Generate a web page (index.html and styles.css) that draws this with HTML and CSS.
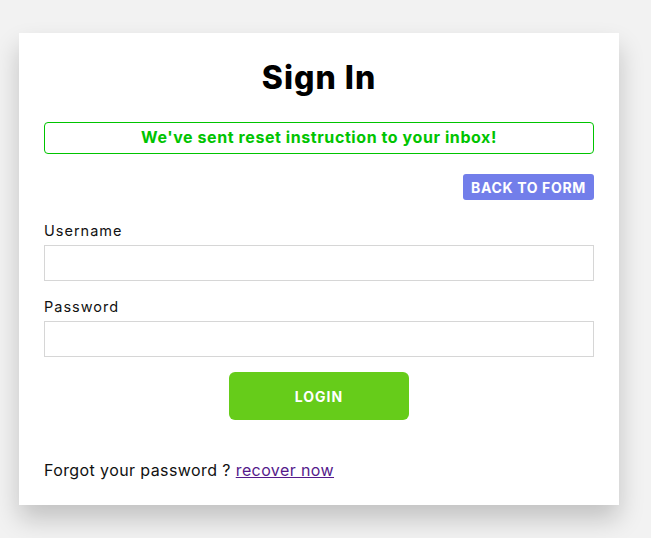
FILE: index.html
```html
<!DOCTYPE html>
<html lang="en">
<head>
<meta charset="utf-8">
<title>Sign In</title>
<link rel="stylesheet" href="styles.css">
</head>
<body>
<div class="card">
  <h1 class="title">Sign In</h1>
  <div class="alert">We've sent reset instruction to your inbox!</div>
  <div class="back-row"><button class="back-btn" type="button">BACK TO FORM</button></div>
  <form class="form">
    <label class="label" for="u">Username</label>
    <input class="input" id="u" type="text">
    <label class="label" for="p">Password</label>
    <input class="input" id="p" type="password">
    <div class="login-row"><button class="login-btn" type="button">LOGIN</button></div>
  </form>
  <p class="forgot">Forgot your password ? <a class="link" href="#">recover now</a></p>
</div>
</body>
</html>
```

FILE: styles.css
```css
html, body {
  margin: 0;
  background: #f2f2f2;
}
body {
  padding: 33px 0 40px 19px;
  font-family: "Inter", "Liberation Sans", sans-serif;
  color: #111;
}
.card {
  width: 600px;
  box-sizing: border-box;
  background: #fff;
  padding: 25px;
  box-shadow: 0 14px 24px rgba(0,0,0,0.2);
}
.title {
  margin: 0 0 24px;
  font-size: 32px;
  line-height: 40px;
  font-weight: 800;
  text-align: center;
  color: #000;
  letter-spacing: 1px;
}
.alert {
  box-sizing: border-box;
  height: 32px;
  border: 1px solid #00c400;
  border-radius: 4px;
  color: #00c400;
  font-weight: 700;
  font-size: 16px;
  line-height: 29px;
  text-align: center;
  letter-spacing: 0.58px;
}
.back-row {
  display: flex;
  justify-content: flex-end;
  margin-top: 20px;
}
.back-btn {
  height: 26px;
  width: 131px;
  border: 0;
  border-radius: 3px;
  background: #727eea;
  color: #fff;
  font-family: inherit;
  font-weight: 700;
  font-size: 14px;
  letter-spacing: 0.65px;
  padding: 0;
}
.form {
  display: flex;
  flex-direction: column;
  margin-top: 22px;
}
.label {
  font-size: 14.5px;
  line-height: 18px;
  letter-spacing: 1px;
  color: #111;
  margin-bottom: 5px;
}
.input {
  box-sizing: border-box;
  height: 36px;
  border: 1px solid #d6d6d6;
  margin: 0 0 17px;
  padding: 0 8px;
  font-family: inherit;
  outline: none;
}
.input + .label + .input {
  margin-bottom: 15px;
}
.login-row {
  display: flex;
  justify-content: center;
}
.login-btn {
  width: 180px;
  height: 48px;
  border: 0;
  border-radius: 6px;
  background: #66cc1a;
  color: #fff;
  font-family: inherit;
  font-weight: 700;
  font-size: 14px;
  letter-spacing: 1px;
}
.forgot {
  margin: 40px 0 0;
  font-size: 16px;
  line-height: 20px;
  letter-spacing: 0.4px;
  color: #111;
}
.link {
  color: #551a8b;
}
```
